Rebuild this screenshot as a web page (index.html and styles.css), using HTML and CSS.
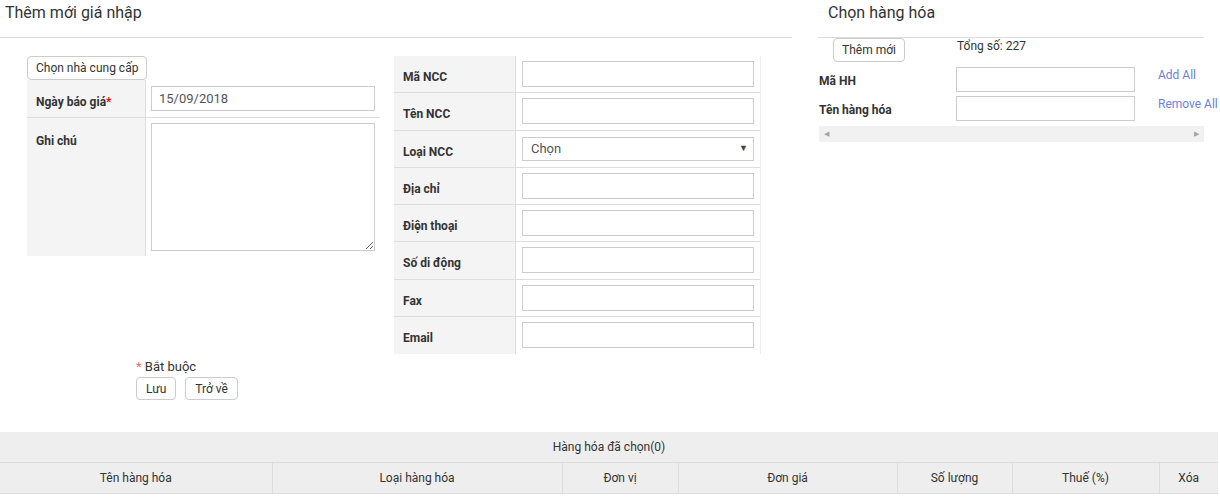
FILE: index.html
```html
<!DOCTYPE html>
<html lang="vi">
<head>
<meta charset="UTF-8">
<title>Thêm mới giá nhập</title>
<link rel="stylesheet" href="styles.css">
</head>
<body>
<div class="page">
<div class="top">
<section class="left-panel">
<h2 class="title">Thêm mới giá nhập</h2>
<div class="form-area">
<div class="col-a">
<button class="btn supplier">Chọn nhà cung cấp</button>
<div class="form-grid price">
<div class="form-row">
<div class="label">Ngày báo giá<span class="req">*</span></div>
<div class="field"><input class="text" type="text" value="15/09/2018"></div>
</div>
<div class="form-row tall">
<div class="label top">Ghi chú</div>
<div class="field"><textarea class="note"></textarea></div>
</div>
</div>
</div>
<div class="form-grid ncc">
<div class="form-row"><div class="label">Mã NCC</div><div class="field"><input class="text" type="text"></div></div>
<div class="form-row"><div class="label">Tên NCC</div><div class="field"><input class="text" type="text"></div></div>
<div class="form-row"><div class="label">Loại NCC</div><div class="field"><div class="select-wrap"><select class="select"><option>Chọn</option></select></div></div></div>
<div class="form-row"><div class="label">Địa chỉ</div><div class="field"><input class="text" type="text"></div></div>
<div class="form-row"><div class="label">Điện thoại</div><div class="field"><input class="text" type="text"></div></div>
<div class="form-row"><div class="label">Số di động</div><div class="field"><input class="text" type="text"></div></div>
<div class="form-row"><div class="label">Fax</div><div class="field"><input class="text" type="text"></div></div>
<div class="form-row"><div class="label">Email</div><div class="field"><input class="text" type="text"></div></div>
</div>
</div>
<div class="actions">
<div class="required"><span class="star">*</span> Bắt buộc</div>
<div class="buttons">
<button class="btn small">Lưu</button>
<button class="btn small">Trở về</button>
</div>
</div>
</section>

<section class="right-panel">
<h2 class="title">Chọn hàng hóa</h2>
<div class="toolbar">
<button class="btn add">Thêm mới</button>
<span class="total">Tổng số: 227</span>
</div>
<div class="filter">
<label class="f-label">Mã HH</label>
<input class="text f-input" type="text">
<a class="link" href="#">Add All</a>
<label class="f-label">Tên hàng hóa</label>
<input class="text f-input" type="text">
<a class="link" href="#">Remove All</a>
</div>
<div class="hscroll">
<span class="arrow">&#9664;</span>
<span class="arrow">&#9654;</span>
</div>
</section>
</div>

<table class="selected">
<colgroup>
<col class="c1"><col class="c2"><col class="c3"><col class="c4"><col class="c5"><col class="c6"><col class="c7">
</colgroup>
<thead>
<tr><th colspan="7" class="caption">Hàng hóa đã chọn(0)</th></tr>
<tr>
<th>Tên hàng hóa</th>
<th>Loại hàng hóa</th>
<th>Đơn vị</th>
<th>Đơn giá</th>
<th>Số lượng</th>
<th>Thuế (%)</th>
<th>Xóa</th>
</tr>
</thead>
</table>
</div>
</body>
</html>
```

FILE: styles.css
```css
body {
margin: 0;
font-family: Roboto, "Liberation Sans", Arial, sans-serif;
font-size: 12px;
color: #333;
background: #fff;
}

.page {
width: 1218px;
}

.top {
display: flex;
}

/* headings with the grey rule under them */
.title {
margin: 0;
height: 38px;
box-sizing: border-box;
border-bottom: 1px solid #ddd;
font-size: 16px;
font-weight: 400;
line-height: 26px;
color: #333;
}

.left-panel {
width: 792px;
}

.left-panel .title {
padding-left: 5px;
}

.form-area {
display: flex;
align-items: flex-start;
gap: 14px;
padding: 18px 0 0 27px;
}

.col-a {
width: 353px;
}

.btn {
display: block;
height: 24px;
padding: 0 9px;
font-family: inherit;
font-size: 12px;
color: #333;
background: #fff;
border: 1px solid #ccc;
border-radius: 4px;
cursor: pointer;
}

.btn.supplier {
padding: 0 8px;
}

/* label / field rows */
.form-grid {
display: flex;
flex-direction: column;
}

.form-row {
display: flex;
box-sizing: border-box;
height: 38px;
border-bottom: 1px solid #ddd;
}

.form-row:last-child {
border-bottom: none;
}

.form-row.tall {
height: 138px;
}

.label {
display: flex;
align-items: center;
box-sizing: border-box;
width: 119px;
padding: 6px 0 0 9px;
background: #f4f4f4;
border-right: 1px solid #ddd;
font-weight: bold;
}

.label.top {
align-items: flex-start;
padding-top: 16px;
}

.field {
display: flex;
align-items: center;
padding: 0 5px;
}

.tall .field {
align-items: flex-start;
padding-top: 5px;
}

.req {
color: #e00;
}

.text {
display: block;
box-sizing: border-box;
width: 224px;
height: 25px;
padding: 0 7px;
border: 1px solid #ccc;
font-family: inherit;
font-size: 13px;
color: #555;
background: #fff;
}

.note {
display: block;
box-sizing: border-box;
width: 224px;
height: 128px;
margin: 0;
border: 1px solid #ccc;
font-family: inherit;
font-size: 13px;
}

/* supplier block */
.ncc {
width: 367px;
box-sizing: border-box;
border-right: 1px solid #eee;
}

.ncc .form-row {
height: 37.25px;
}

.ncc .label {
width: 123px;
}

.ncc .field {
padding: 0 6px;
}

.ncc .text {
width: 232px;
height: 26px;
}

.select-wrap {
position: relative;
width: 232px;
}

.select {
display: block;
box-sizing: border-box;
width: 232px;
height: 24px;
padding: 0 8px;
border: 1px solid #ccc;
border-radius: 0;
background: #fff;
font-family: inherit;
font-size: 13px;
color: #555;
appearance: none;
-webkit-appearance: none;
}

.select-wrap::after {
content: "\25BC";
position: absolute;
right: 6px;
top: 6px;
font-size: 9px;
color: #444;
pointer-events: none;
}

.actions {
padding: 5px 0 0 136px;
}

.required {
line-height: 16px;
font-size: 13px;
}

.star {
color: #f07070;
}

.buttons {
display: flex;
gap: 9px;
margin-top: 2px;
}

.btn.small {
height: 23px;
padding: 0 9px;
}

/* right side */
.right-panel {
width: 386px;
margin-left: 26px;
}

.right-panel .title {
padding-left: 10px;
}

.toolbar {
display: flex;
align-items: flex-start;
}

.btn.add {
width: 72px;
margin-left: 15px;
padding: 0;
}

.total {
margin-left: 52px;
padding-top: 1px;
}

.filter {
display: grid;
grid-template-columns: 137px 179px auto;
row-gap: 4px;
margin-top: 5px;
padding-left: 1px;
}

.f-label {
font-weight: bold;
align-self: center;
padding-top: 3px;
}

.f-input {
width: 179px;
}

.link {
margin-left: 23px;
color: #6c7fdf;
text-decoration: none;
padding-top: 1px;
white-space: nowrap;
}

.hscroll {
display: flex;
justify-content: space-between;
align-items: center;
width: 385px;
height: 16px;
margin: 5px 0 0 1px;
padding: 0 5px;
box-sizing: border-box;
background: #f1f1f1;
}

.arrow {
font-size: 7px;
color: #a3a3a3;
}

/* selected goods table */
.selected {
width: 1218px;
margin-top: 32px;
border-collapse: collapse;
table-layout: fixed;
}

.selected th {
height: 30px;
padding: 0;
background: #eee;
font-weight: 400;
font-size: 12px;
color: #333;
border: 1px solid #ddd;
}

.selected th:first-child {
border-left: none;
}

.selected th:last-child {
border-right: none;
}

.selected .caption {
border-top: none;
}

.c1 { width: 272px; }
.c2 { width: 290px; }
.c3 { width: 116px; }
.c4 { width: 219px; }
.c5 { width: 115px; }
.c6 { width: 147px; }
.c7 { width: 59px; }
```
